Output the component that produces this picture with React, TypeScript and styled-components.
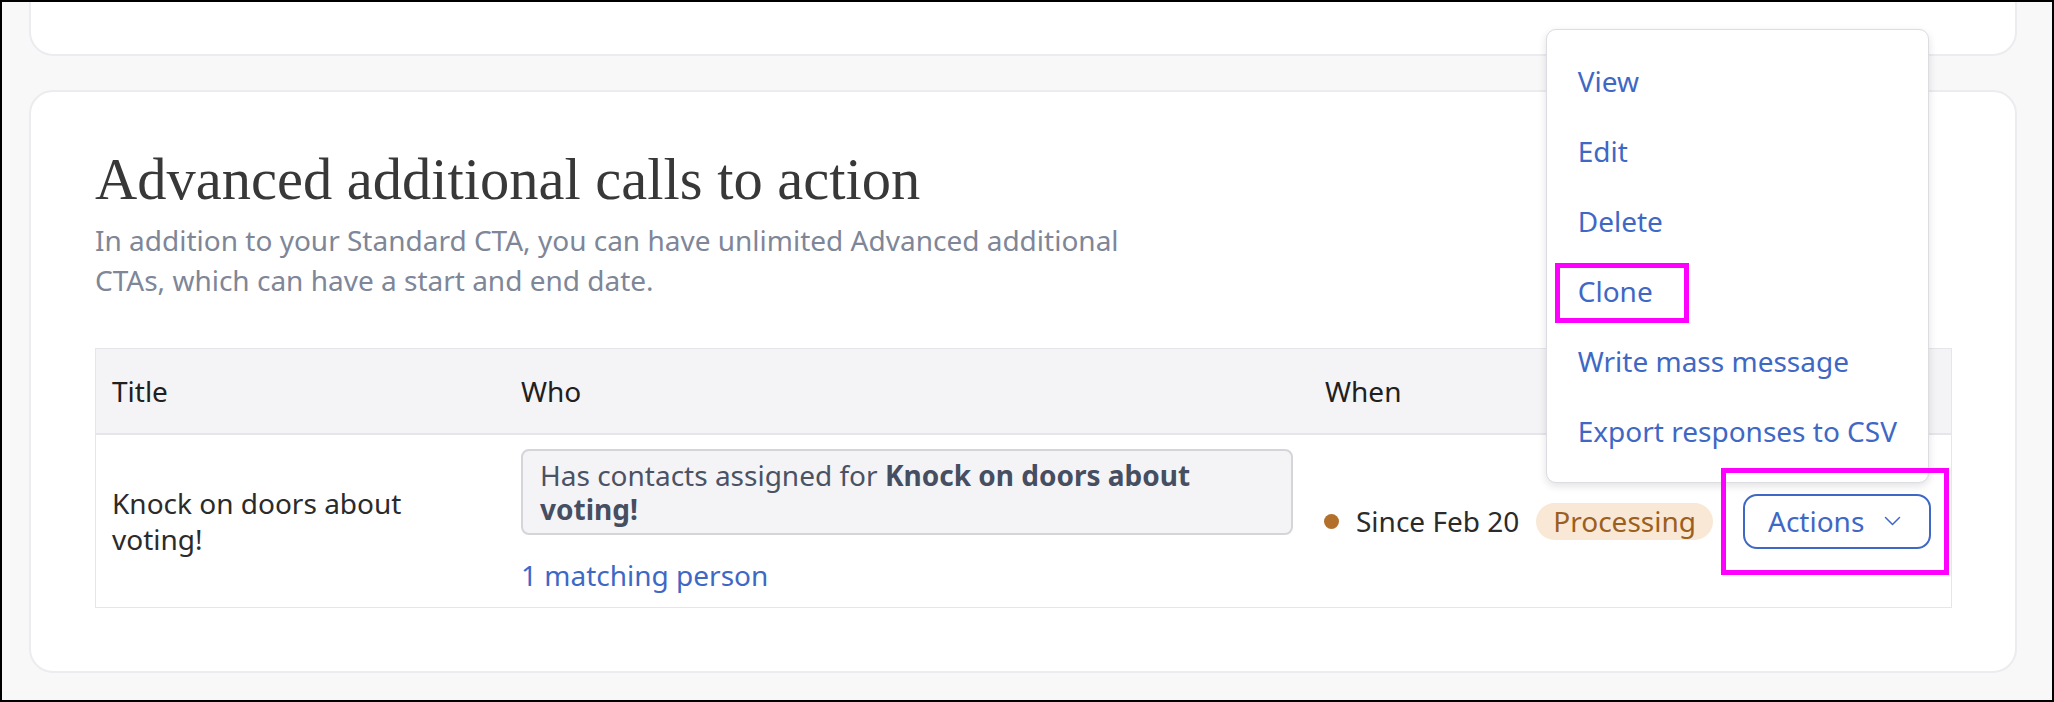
import React from "react";
import styled, { createGlobalStyle } from "styled-components";

const GlobalStyle = createGlobalStyle`
  html, body { margin: 0; padding: 0; }
  body { font-family: "Noto Sans", "Open Sans", sans-serif; }
  * { box-sizing: border-box; }
`;

const BLUE = "#3f68c5";

const Frame = styled.div`
  width: 2054px;
  height: 702px;
  border: 2px solid #000;
  background: #f8f8f8;
  overflow: hidden;
  padding: 0 35px 0 27px;
  display: flex;
  flex-direction: column;
  gap: 34px;
`;

const Card = styled.section`
  flex-shrink: 0;
  background: #fff;
  border: 2px solid #ececf0;
  border-radius: 24px;
`;

const TopCard = styled(Card)`
  margin-top: -30px;
  height: 84px;
`;

const MainCard = styled(Card)`
  padding: 59px 63px 63px 64px;
`;

const Heading = styled.h2`
  margin: 0;
  font-family: "Liberation Serif", serif;
  font-weight: 400;
  font-size: 58.5px;
  line-height: 58px;
  color: #383838;
`;

const Subtitle = styled.p`
  margin: 11px 0 0;
  max-width: 1060px;
  font-size: 28px;
  line-height: 40px;
  color: #7e8698;
`;

const Table = styled.div`
  margin-top: 48px;
  border: 1px solid #e5e5ea;
`;

const Row = styled.div<{ $head?: boolean }>`
  display: grid;
  grid-template-columns: 409px 804px 418px 1fr;
  align-items: center;
  background: ${(p) => (p.$head ? "#f4f4f6" : "#fff")};
  border-bottom: ${(p) => (p.$head ? "2px solid #e5e5ea" : "none")};
  padding: ${(p) => (p.$head ? "0" : "14px 0")};
`;

const Cell = styled.div<{ $head?: boolean }>`
  padding: ${(p) => (p.$head ? "24px 16px" : "0 16px")};
  font-size: 28px;
  line-height: 36px;
  color: ${(p) => (p.$head ? "#202020" : "#2b2b2b")};
`;

const WhoCell = styled(Cell)`
  display: flex;
  flex-direction: column;
  align-items: flex-start;
`;

const Criteria = styled.div`
  width: 100%;
  background: #f4f4f6;
  border: 2px solid #d3d5db;
  border-radius: 8px;
  padding: 7px 17px;
  font-size: 28px;
  line-height: 34px;
  color: #4b5264;

  strong {
    font-weight: 700;
    color: #464e61;
  }
`;

const Link = styled.a`
  margin-top: 22px;
  color: ${BLUE};
  text-decoration: none;
  cursor: pointer;
`;

const WhenCell = styled(Cell)`
  display: flex;
  align-items: center;
  white-space: nowrap;
`;

const Dot = styled.span`
  width: 15px;
  height: 15px;
  border-radius: 50%;
  background: #b3702b;
  margin: 0 17px 0 -1px;
  flex-shrink: 0;
`;

const Badge = styled.span`
  margin-left: 17px;
  height: 37px;
  line-height: 37px;
  padding: 0 17px;
  border-radius: 19px;
  background: #f9e8d5;
  color: #9c5f20;
`;

const ActionsCell = styled(Cell)`
  display: flex;
`;

const Anchor = styled.div`
  position: relative;
`;

const ActionsButton = styled.button`
  display: flex;
  align-items: center;
  gap: 20px;
  width: 188px;
  height: 55px;
  padding: 0 0 0 23px;
  border: 2px solid ${BLUE};
  border-radius: 14px;
  background: #fff;
  color: ${BLUE};
  font-family: inherit;
  font-size: 28px;
  line-height: 35px;
  cursor: pointer;
`;

const Highlight = styled.span<{ $l: number; $t: number; $w: number; $h: number }>`
  position: absolute;
  left: ${(p) => p.$l}px;
  top: ${(p) => p.$t}px;
  width: ${(p) => p.$w}px;
  height: ${(p) => p.$h}px;
  border: 5px solid #ff00ff;
  pointer-events: none;
  z-index: 3;
`;

const Menu = styled.ul`
  position: absolute;
  right: 2px;
  bottom: calc(100% + 11px);
  margin: 0;
  padding: 16px 31px;
  list-style: none;
  background: #fff;
  border: 1px solid #dcdce2;
  border-radius: 10px;
  box-shadow: 0 3px 8px rgba(0, 0, 0, 0.12);
  z-index: 2;
`;

const MenuItem = styled.li`
  position: relative;
  padding: 17px 0;
  font-size: 28px;
  line-height: 36px;
  color: ${BLUE};
  white-space: nowrap;
  cursor: pointer;
`;

const Chevron = () => (
  <svg width="17" height="10" viewBox="0 0 17 10" fill="none">
    <polyline
      points="1.5,1.5 8.5,8.5 15.5,1.5"
      stroke="currentColor"
      strokeWidth="1.5"
      strokeLinecap="round"
      strokeLinejoin="round"
    />
  </svg>
);

const menuItems = [
  "View",
  "Edit",
  "Delete",
  "Clone",
  "Write mass message",
  "Export responses to CSV",
];

export default function App() {
  return (
    <>
      <GlobalStyle />
      <Frame>
        <TopCard />
        <MainCard>
          <Heading>Advanced additional calls to action</Heading>
          <Subtitle>
            In addition to your Standard CTA, you can have unlimited Advanced
            additional CTAs, which can have a start and end date.
          </Subtitle>
          <Table>
            <Row $head>
              <Cell $head>Title</Cell>
              <Cell $head>Who</Cell>
              <Cell $head>When</Cell>
              <Cell $head />
            </Row>
            <Row>
              <Cell>Knock on doors about voting!</Cell>
              <WhoCell>
                <Criteria>
                  Has contacts assigned for <strong>Knock on doors about voting!</strong>
                </Criteria>
                <Link>1 matching person</Link>
              </WhoCell>
              <WhenCell>
                <Dot />
                Since Feb 20
                <Badge>Processing</Badge>
              </WhenCell>
              <ActionsCell>
                <Anchor>
                  <Menu>
                    {menuItems.map((item) => (
                      <MenuItem key={item}>
                        {item}
                        {item === "Clone" && (
                          <Highlight $l={-23} $t={7} $w={134} $h={60} />
                        )}
                      </MenuItem>
                    ))}
                  </Menu>
                  <ActionsButton>
                    Actions
                    <Chevron />
                  </ActionsButton>
                  <Highlight $l={-22} $t={-26} $w={228} $h={107} />
                </Anchor>
              </ActionsCell>
            </Row>
          </Table>
        </MainCard>
      </Frame>
    </>
  );
}
